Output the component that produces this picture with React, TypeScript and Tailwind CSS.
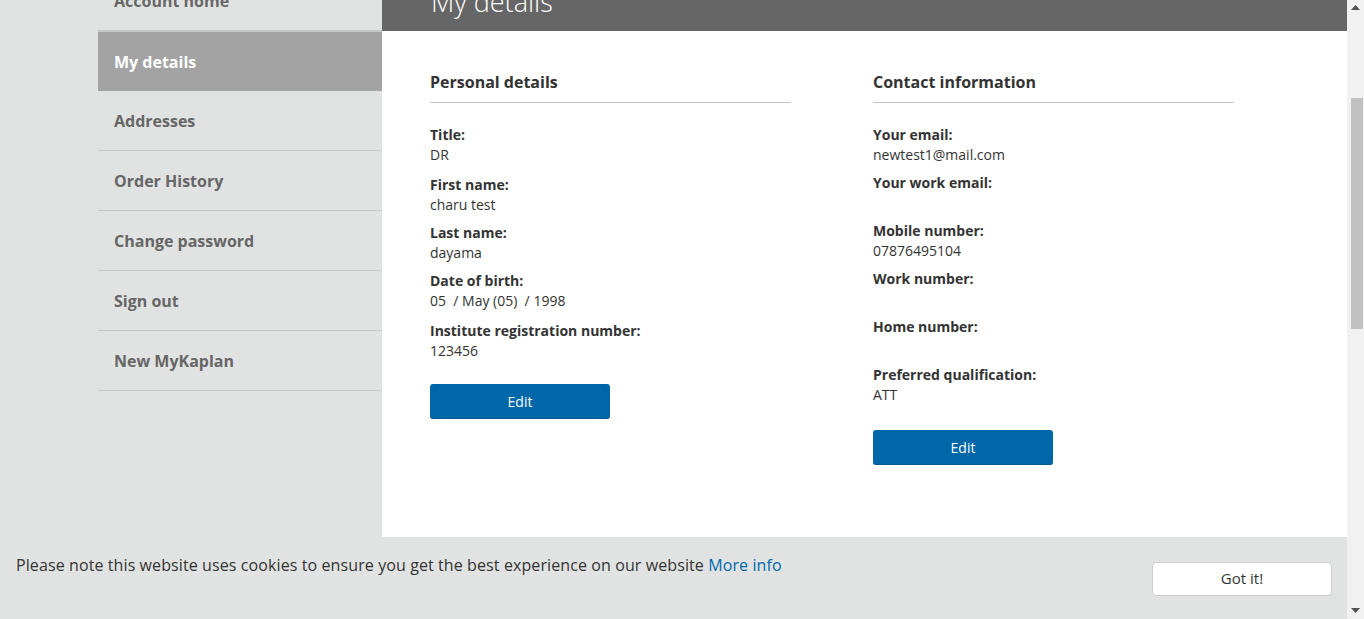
const FONT = { fontFamily: '"Open Sans", "Noto Sans", Arial, sans-serif' }

const navItems = [
  { label: 'Account home' },
  { label: 'My details', active: true },
  { label: 'Addresses' },
  { label: 'Order History' },
  { label: 'Change password' },
  { label: 'Sign out' },
  { label: 'New MyKaplan' },
]

type Row = { label: string; value: string; extra?: boolean }

const personal: Row[] = [
  { label: 'Title:', value: 'DR', extra: true },
  { label: 'First name:', value: 'charu test' },
  { label: 'Last name:', value: 'dayama' },
  { label: 'Date of birth:', value: '05\u00a0 / May (05)\u00a0 / 1998', extra: true },
  { label: 'Institute registration number:', value: '123456' },
]

const contact: Row[] = [
  { label: 'Your email:', value: 'newtest1@mail.com' },
  { label: 'Your work email:', value: '' },
  { label: 'Mobile number:', value: '07876495104' },
  { label: 'Work number:', value: '' },
  { label: 'Home number:', value: '' },
  { label: 'Preferred qualification:', value: 'ATT' },
]

function Section({ title, rows, btnGap }: { title: string; rows: Row[]; btnGap: string }) {
  return (
    <div>
      <h2 className="text-[16px] font-bold leading-[22px] text-[#333] pb-[9px] border-b border-[#c3c3c3]">{title}</h2>
      <dl className="mt-[22px] flex flex-col gap-[8px]">
        {rows.map((r) => (
          <div key={r.label} className={r.extra ? 'pb-[2px]' : ''}>
            <dt className="text-[14px] font-bold leading-[20px] text-[#333]">{r.label}</dt>
            <dd className="text-[14px] leading-[20px] text-[#333] min-h-[20px]">{r.value}</dd>
          </div>
        ))}
      </dl>
      <button className={`${btnGap} w-[180px] h-[35px] rounded-[3px] bg-[#0067a8] text-white text-[14px] border-b border-[#005a93]`}>
        Edit
      </button>
    </div>
  )
}

export default function App() {
  return (
    <div className="flex h-[619px] w-[1364px] overflow-hidden bg-[#e1e3e2]" style={FONT}>
      <div className="relative flex-1 overflow-hidden">
        {/* page, scrolled down a little */}
        <div className="-mt-[49px] flex pl-[98px]">
          <nav className="w-[284px] pt-[20px] shrink-0">
            {navItems.map((item) => (
              <div
                key={item.label}
                className={
                  item.active
                    ? 'h-[60px] flex items-center pl-[16px] bg-[#a3a3a3] text-white text-[16px] font-bold border-t border-[#c8c8c8]'
                    : 'h-[60px] flex items-center pl-[16px] text-[#666] text-[16px] font-bold border-b border-[#c6c6c6]'
                }
              >
                {item.label}
              </div>
            ))}
          </nav>
          <main className="flex-1 bg-white min-h-[700px]">
            <header className="h-[80px] bg-[#666] pl-[49px] flex items-end">
              <h1 className="text-[27px] font-light text-white leading-none pb-[16px]">My details</h1>
            </header>
            <div className="pl-[48px] pt-[40px] grid grid-cols-[361px_361px] gap-x-[82px] items-start">
              <Section title="Personal details" rows={personal} btnGap="mt-[23px]" />
              <Section title="Contact information" rows={contact} btnGap="mt-[25px]" />
            </div>
          </main>
        </div>

        {/* cookie bar */}
        <div className="absolute left-0 right-0 bottom-0 h-[82px] bg-[#e1e3e2] flex items-start justify-between pl-[16px] pr-[15px]">
          <p className="mt-[16px] text-[16px] text-[#333] leading-[24px] tracking-[0.1px]">
            Please note this website uses cookies to ensure you get the best experience on our website{' '}
            <a className="text-[#0068ad]">More info</a>
          </p>
          <button className="mt-[25px] w-[180px] h-[34px] bg-white border border-[#cccccc] rounded-[4px] text-[15px] text-[#333] pb-[2px]">
            Got it!
          </button>
        </div>
      </div>

      {/* scrollbar */}
      <div className="w-[17px] bg-[#f1f1f1] flex flex-col items-center py-[4px]">
        <svg width="9" height="5" viewBox="0 0 9 5" className="mt-[1px]">
          <path d="M0 5 L4.5 0 L9 5 Z" fill="#505050" />
        </svg>
        <div className="w-[12px] h-[231px] bg-[#c1c1c1] ml-[2px] mt-[88px]" />
        <svg width="9" height="5" viewBox="0 0 9 5" className="mt-auto mb-[2px]">
          <path d="M0 0 L9 0 L4.5 5 Z" fill="#505050" />
        </svg>
      </div>
    </div>
  )
}
